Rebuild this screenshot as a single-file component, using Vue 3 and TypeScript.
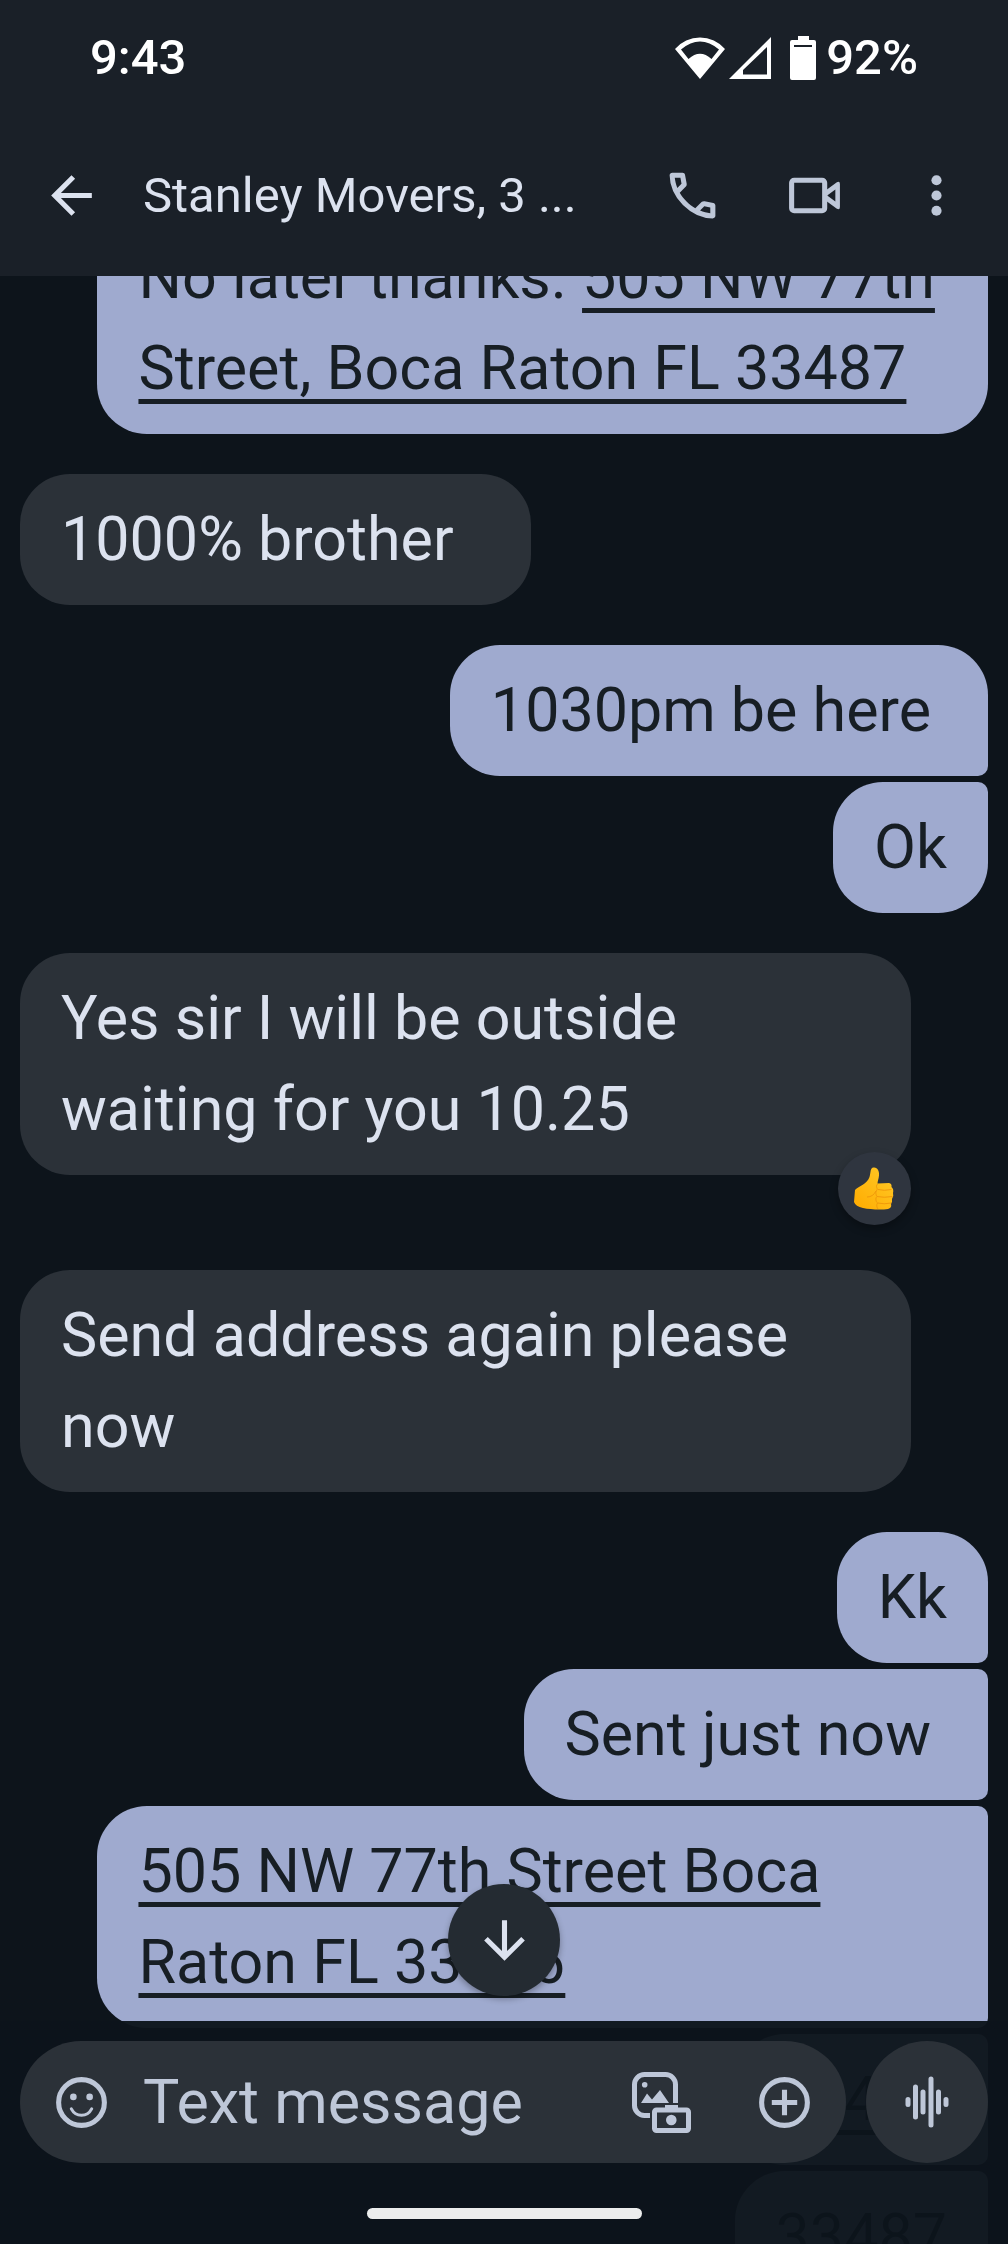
<script setup lang="ts">
import { ref } from 'vue'

interface Message {
  id: number
  from: 'me' | 'them'
  text: string
  link?: string
  full?: boolean
  joinsPrevious?: boolean
  joinsNext?: boolean
  reaction?: boolean
}

const draft = ref('')

const messages: Message[] = [
  { id: 1, from: 'me', text: 'No later thanks. ', link: '505 NW 77th\nStreet, Boca Raton FL 33487', full: true },
  { id: 2, from: 'them', text: '1000% brother' },
  { id: 3, from: 'me', text: '1030pm be here', joinsNext: true },
  { id: 4, from: 'me', text: 'Ok', joinsPrevious: true },
  { id: 5, from: 'them', text: 'Yes sir I will be outside\nwaiting for you 10.25', full: true, reaction: true },
  { id: 6, from: 'them', text: 'Send address again please\nnow', full: true },
  { id: 7, from: 'me', text: 'Kk', joinsNext: true },
  { id: 8, from: 'me', text: 'Sent just now', joinsPrevious: true, joinsNext: true },
  { id: 9, from: 'me', text: '', link: '505 NW 77th Street Boca\nRaton FL 33486', full: true, joinsPrevious: true, joinsNext: true },
  { id: 10, from: 'me', text: '', link: '33486', joinsPrevious: true, joinsNext: true },
  { id: 11, from: 'me', text: '33487', joinsPrevious: true },
]
</script>

<template>
  <div class="app">
    <header class="top">
      <div class="status">
        <span class="clock">9:43</span>
        <div class="indicators">
          <svg class="wifi" viewBox="0 0 50 42" width="50" height="42" aria-hidden="true">
            <path fill-rule="evenodd" d="M25 42 0 12A33 33 0 0 1 50 12ZM13.500 22 6 12.500Q25-3.500 44 12.500L36.500 22Q25 11.500 13.500 22Z" />
          </svg>
          <svg class="signal" viewBox="0 0 42 42" width="42" height="42" aria-hidden="true">
            <path fill-rule="evenodd" d="M0 42 42 0V42ZM14 33V37.500H38V10Z" />
          </svg>
          <svg class="battery" viewBox="0 0 26 44" width="26" height="44" aria-hidden="true">
            <path fill-rule="evenodd" d="M8 0H19V4H24a2 2 0 0 1 2 2V42a2 2 0 0 1-2 2H2a2 2 0 0 1-2-2V6A2 2 0 0 1 2 4H8ZM4 9V11H22V9Z" />
          </svg>
          <span class="charge">92%</span>
        </div>
      </div>

      <div class="toolbar">
        <button class="icon-button back" type="button" aria-label="Back">
          <svg class="icon" viewBox="0 0 24 24"><path d="M20 11H7.830l5.590-5.590L12 4l-8 8 8 8 1.410-1.410L7.830 13H20z" /></svg>
        </button>
        <h1 class="title">Stanley Movers, 3 ...</h1>
        <div class="actions">
          <button class="icon-button" type="button" aria-label="Call">
            <svg class="icon" viewBox="0 0 24 24">
              <path d="M19.950 21q-3.125 0-6.175-1.362t-5.550-3.863t-3.862-5.550T3 4.050q0-.450.300-.750t.750-.300H8.100q.350 0 .625.238t.325.562l.650 3.500q.050.400-.025.675T9.400 8.450L6.975 10.900q.500.925 1.187 1.787t1.513 1.663q.775.775 1.625 1.438T13.100 17l2.350-2.350q.225-.225.588-.337t.712-.063l3.450.700q.350.100.575.363T21 15.900v4.050q0 .450-.300.750t-.750.300M6.025 9l1.650-1.650L7.250 5H5.025q.125 1.025.350 2.025T6.025 9m8.950 8.950q.975.425 1.988.675T19 18.950v-2.200l-2.350-.475z" />
            </svg>
          </button>
          <button class="icon-button" type="button" aria-label="Video call">
            <svg class="icon" viewBox="0 0 24 24">
              <rect class="line" x="3" y="6" width="13" height="12" rx="1" />
              <path fill-rule="evenodd" d="M16.500 9.900 20.800 6.800Q22 6.200 22 7.500V16.500Q22 17.800 20.800 17.200L16.500 14.100ZM17 12 20.200 14.400V9.600Z" />
            </svg>
          </button>
          <button class="icon-button" type="button" aria-label="More options">
            <svg class="icon" viewBox="0 0 24 24">
              <circle cx="12" cy="6" r="2" /><circle cx="12" cy="12" r="2" /><circle cx="12" cy="18" r="2" />
            </svg>
          </button>
        </div>
      </div>
    </header>

    <main class="conversation">
      <ol class="feed">
        <li
          v-for="m in messages"
          :key="m.id"
          class="bubble"
          :class="[m.from, { full: m.full, 'joins-previous': m.joinsPrevious, 'joins-next': m.joinsNext, reacted: m.reaction, phrase: !m.full && m.text.includes(' ') }]"
        >{{ m.text }}<a v-if="m.link" class="address" href="#">{{ m.link }}</a><span v-if="m.reaction" class="reaction" role="img" aria-label="Thumbs up">
          <svg viewBox="0 0 40 43" width="40" height="43">
            <defs>
              <linearGradient id="hand" x1="0" y1="1" x2="1" y2="0">
                <stop offset="0" stop-color="#ffab00" />
                <stop offset="1" stop-color="#ffca28" />
              </linearGradient>
            </defs>
            <path fill="url(#hand)" d="M1 23C5 19 13 17 15.500 10C17 5 16 1 19.500.500C23.500 0 25.500 4 25 8.500C24.700 12 23.500 14.500 23.500 16.500L35 16Q38 16.500 37.500 20Q40 22 39 26Q40 29 38 32Q38.500 35 37 36.500Q38 41 34 42C27 43 16 42.500 9 41C4 40 1 38 0 35Z" />
            <path fill="none" stroke="#f19a0b" stroke-width="1" d="M37.500 22.500Q30 24 24 22.500M38.500 29.500Q30 31 23 29.500M37.500 36Q30 37.500 23.500 36M23.500 17C21 20 24 21 23 23C21 25 22 28 23 29.500C21 31 22 35 23.500 36C22 38 23 41 24 42M22 24Q19 30 13 30" />
          </svg>
        </span></li>
      </ol>

      <button class="jump" type="button" aria-label="Scroll to latest message">
        <svg class="icon" viewBox="0 0 24 24"><path d="M11 4v12.170l-5.590-5.590L4 12l8 8 8-8-1.410-1.410L13 16.170V4z" /></svg>
      </button>

      <footer class="bottom">
        <form class="composer" @submit.prevent>
          <div class="field">
            <button class="icon-button" type="button" aria-label="Emoji">
              <svg class="icon" viewBox="0 0 24 24">
                <circle class="line" cx="12" cy="12" r="9" />
                <circle cx="8.800" cy="9.800" r="1.300" /><circle cx="15.200" cy="9.800" r="1.300" />
                <path class="smile" d="M8 14.500Q9.300 17 12 17T16 14.500" />
              </svg>
            </button>
            <input v-model="draft" class="draft" type="text" placeholder="Text message" aria-label="Text message" />
            <button class="icon-button gallery" type="button" aria-label="Gallery and camera">
              <svg viewBox="0 0 59 61" width="59" height="61">
                <path class="wide-line" d="M18 43.500H12.500a10 10 0 0 1-10-10V12.500a10 10 0 0 1 10-10h21a10 10 0 0 1 10 10V31" />
                <circle cx="12.700" cy="12.700" r="2.800" />
                <path d="M9 31 15 21.500 20 27.500 28 18 37 31Z" />
                <rect class="wide-line" x="22.500" y="38" width="34" height="20.500" rx="2" />
                <path d="M33 33h13v4H33z" />
                <circle cx="39.300" cy="48" r="5.300" />
              </svg>
            </button>
            <button class="icon-button" type="button" aria-label="Add attachment">
              <svg class="icon" viewBox="0 0 24 24">
                <circle class="line" cx="12" cy="12" r="9" />
                <path d="M11 7h2v4h4v2h-4v4h-2v-4H7v-2h4z" />
              </svg>
            </button>
          </div>
          <button class="voice" type="button" aria-label="Record voice message">
            <svg viewBox="0 0 44 52" width="44" height="52">
              <path class="wave" d="M3 23.500V28.500M10.500 11V41M18 16V36M26 3V49M33.500 16V36M41 23.500V28.500" />
            </svg>
          </button>
        </form>
        <div class="handle"></div>
      </footer>
    </main>
  </div>
</template>

<style>
body {
  margin: 0;
  background: #0d141b;
}
</style>

<style scoped>
.app {
  display: flex;
  flex-direction: column;
  height: 100vh;
  overflow: hidden;
  background: #0d141b;
  color: #dce2ef;
  font-family: Roboto, "Liberation Sans", sans-serif;
}

button {
  display: flex;
  align-items: center;
  justify-content: center;
  flex: none;
  padding: 0;
  border: 0;
  background: none;
  color: inherit;
}

svg {
  display: block;
  flex: none;
  fill: currentColor;
}

.icon {
  width: 61px;
  height: 61px;
}

.line {
  fill: none;
  stroke: currentColor;
  stroke-width: 2;
}

.wide-line {
  fill: none;
  stroke: currentColor;
  stroke-width: 5;
}

.smile {
  fill: none;
  stroke: currentColor;
  stroke-width: 1.2;
  stroke-linecap: round;
}

.wave {
  fill: none;
  stroke: currentColor;
  stroke-width: 5;
  stroke-linecap: round;
}

.top {
  flex: none;
  background: #1a2028;
}

.status {
  display: flex;
  align-items: center;
  justify-content: space-between;
  height: 115px;
  padding: 0 90px;
  color: #fff;
  font-size: 49px;
  font-weight: 500;
}

.indicators {
  display: flex;
  align-items: center;
}

.signal {
  margin-left: 4px;
}

.battery {
  margin-left: 19px;
}

.charge {
  margin-left: 10px;
}

.toolbar {
  display: flex;
  align-items: center;
  height: 161px;
  padding: 0 41px;
}

.title {
  flex: 1;
  margin: 0 0 0 41px;
  font-size: 49px;
  font-weight: 400;
  line-height: 64px;
  white-space: nowrap;
}

.actions {
  display: flex;
  gap: 61px;
  color: #bec7d8;
}

.conversation {
  position: relative;
  flex: 1;
  min-height: 0;
  overflow: hidden;
}

.feed {
  display: flex;
  flex-direction: column;
  align-items: flex-start;
  margin: -64px 0 0;
  padding: 0 20px;
  list-style: none;
}

.bubble {
  box-sizing: border-box;
  flex: none;
  max-width: 92%;
  margin-bottom: 40px;
  padding: 20px 41px;
  border-radius: 50px;
  font-size: 61px;
  line-height: 91px;
  white-space: pre-line;
}

.full {
  width: 92%;
}

.phrase {
  padding-right: 57px;
}

.them {
  background: #2b3138;
}

.them.phrase {
  padding-right: 77px;
}

.me {
  align-self: flex-end;
  background: #9faacf;
  color: #171e24;
}

.joins-previous {
  border-top-right-radius: 10px;
}

.joins-next {
  margin-bottom: 6px;
  border-bottom-right-radius: 10px;
}

.address {
  color: inherit;
  text-decoration: underline;
  text-decoration-thickness: 5px;
  text-decoration-skip-ink: none;
  text-underline-offset: 10px;
}

.reacted {
  position: relative;
  margin-bottom: 95px;
}

.reaction {
  position: absolute;
  right: 0;
  bottom: -50px;
  display: flex;
  align-items: center;
  justify-content: center;
  width: 73px;
  height: 73px;
  border-radius: 50%;
  background: #2f353f;
  box-shadow: 0 4px 8px rgba(0, 0, 0, 0.3);
}

.jump {
  position: absolute;
  bottom: 248px;
  left: 50%;
  width: 112px;
  height: 112px;
  margin-left: -56px;
  border-radius: 50%;
  background: #242b32;
  color: #dce2ef;
  box-shadow: 0 3px 6px rgba(0, 0, 0, 0.3);
}

.bottom {
  position: absolute;
  right: 0;
  bottom: 0;
  left: 0;
  padding: 20px 20px 25px;
  background: rgba(13, 20, 27, 0.96);
}

.composer {
  display: flex;
  gap: 20px;
  margin: 0;
  color: #bec7d8;
}

.field {
  display: flex;
  flex: 1;
  align-items: center;
  min-width: 0;
  height: 122px;
  padding: 0 31px;
  border-radius: 61px;
  background: #2b3138;
}

.draft {
  flex: 1;
  min-width: 0;
  height: 91px;
  margin-left: 31px;
  padding: 0;
  border: 0;
  outline: 0;
  background: none;
  color: #dce2ef;
  font-family: inherit;
  font-size: 61px;
}

.draft::placeholder {
  color: #bec7d8;
  opacity: 1;
}

.gallery {
  margin-right: 63px;
}

.voice {
  width: 122px;
  height: 122px;
  border-radius: 50%;
  background: #2b3138;
}

.handle {
  width: 275px;
  height: 11px;
  margin: 45px auto 0;
  border-radius: 6px;
  background: #eceded;
}
</style>
